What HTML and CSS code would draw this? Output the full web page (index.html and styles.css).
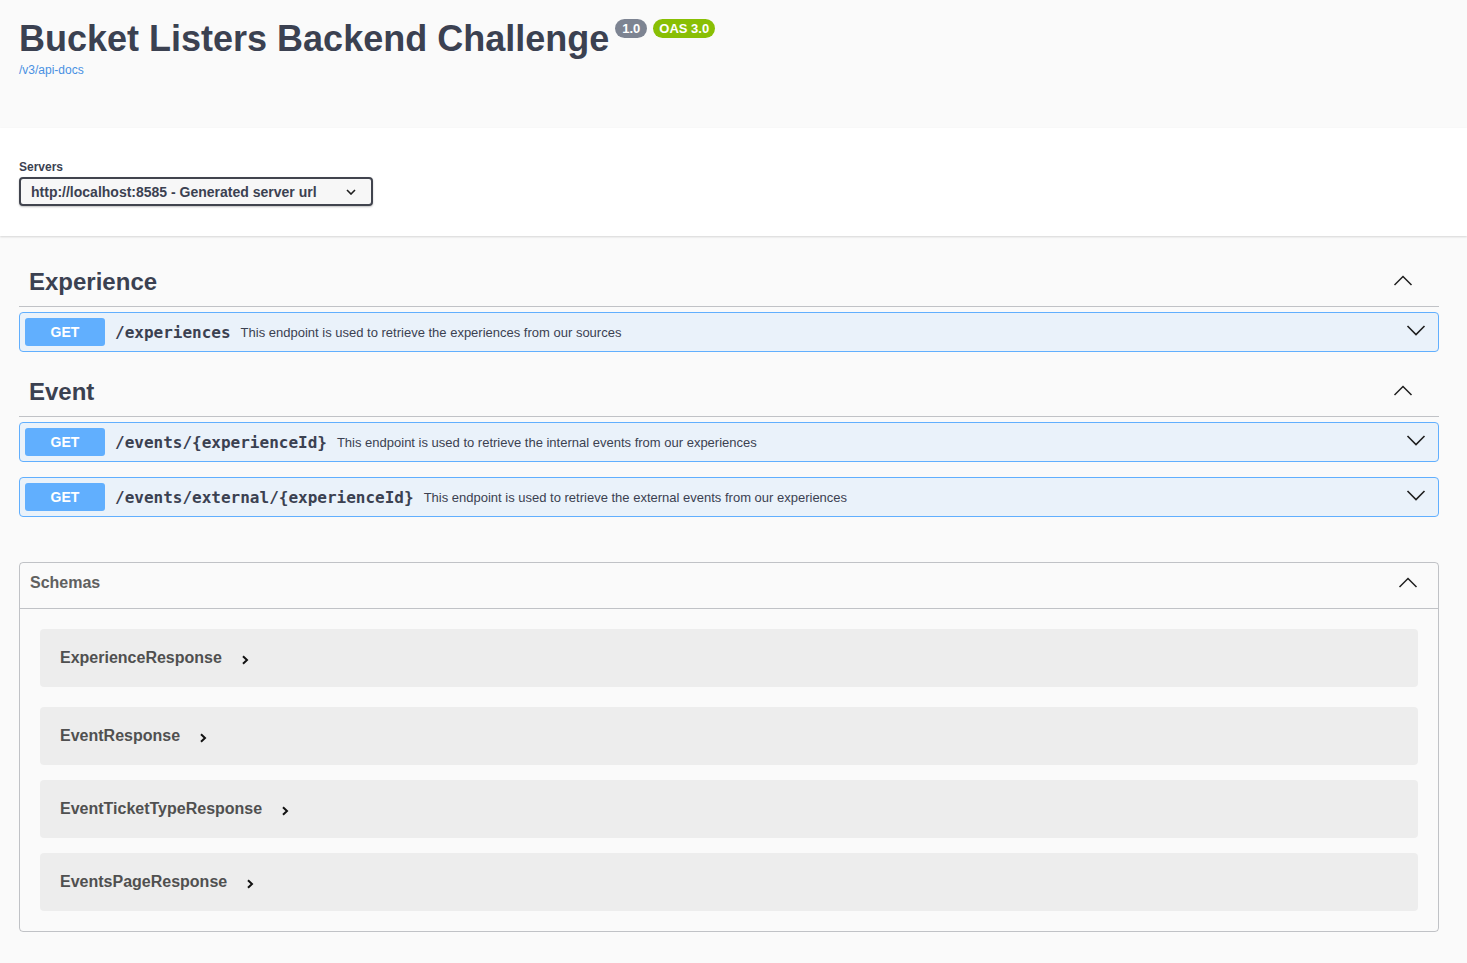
FILE: index.html
```html
<!DOCTYPE html>
<html lang="en">
<head>
<meta charset="utf-8">
<title>Bucket Listers Backend Challenge</title>
<link rel="stylesheet" href="styles.css">
</head>
<body>
  <div class="info">
    <div class="title-row">
      <h2 class="title">Bucket Listers Backend Challenge</h2>
      <span class="badge badge-version">1.0</span>
      <span class="badge badge-oas">OAS 3.0</span>
    </div>
    <a class="spec-link" href="#">/v3/api-docs</a>
  </div>

  <div class="schemes">
    <span class="servers-label">Servers</span>
    <div class="server-select">
      <span>http://localhost:8585 - Generated server url</span>
      <svg class="select-chevron" width="10" height="6" viewBox="0 0 10 6"><polyline points="1,1 5,5 9,1" fill="none" stroke="#1f1f1f" stroke-width="1.6"/></svg>
    </div>
  </div>

  <div class="main">
    <section class="tag-section">
      <h3 class="tag">
        <span>Experience</span>
        <svg class="arrow" width="20" height="20" viewBox="0 0 20 20"><polyline points="1.5,14 10,5.5 18.5,14" fill="none" stroke="#1f1f1f" stroke-width="1.5"/></svg>
      </h3>
      <div class="opblock">
        <span class="method">GET</span>
        <span class="path">/experiences</span>
        <span class="desc">This endpoint is used to retrieve the experiences from our sources</span>
        <svg class="arrow-down" width="20" height="20" viewBox="0 0 20 20"><polyline points="1.5,6 10,14.5 18.5,6" fill="none" stroke="#1f1f1f" stroke-width="1.6"/></svg>
      </div>
    </section>

    <section class="tag-section">
      <h3 class="tag">
        <span>Event</span>
        <svg class="arrow" width="20" height="20" viewBox="0 0 20 20"><polyline points="1.5,14 10,5.5 18.5,14" fill="none" stroke="#1f1f1f" stroke-width="1.5"/></svg>
      </h3>
      <div class="opblock">
        <span class="method">GET</span>
        <span class="path">/events/{experienceId}</span>
        <span class="desc">This endpoint is used to retrieve the internal events from our experiences</span>
        <svg class="arrow-down" width="20" height="20" viewBox="0 0 20 20"><polyline points="1.5,6 10,14.5 18.5,6" fill="none" stroke="#1f1f1f" stroke-width="1.6"/></svg>
      </div>
      <div class="opblock">
        <span class="method">GET</span>
        <span class="path">/events/external/{experienceId}</span>
        <span class="desc">This endpoint is used to retrieve the external events from our experiences</span>
        <svg class="arrow-down" width="20" height="20" viewBox="0 0 20 20"><polyline points="1.5,6 10,14.5 18.5,6" fill="none" stroke="#1f1f1f" stroke-width="1.6"/></svg>
      </div>
    </section>

    <section class="models">
      <h4 class="models-header">
        <span>Schemas</span>
        <svg class="arrow" width="20" height="20" viewBox="0 0 20 20"><polyline points="1.5,14 10,5.5 18.5,14" fill="none" stroke="#1f1f1f" stroke-width="1.5"/></svg>
      </h4>
      <div class="model-list">
        <div class="model-container model-first">
          <span class="model-title">ExperienceResponse</span>
          <svg class="model-toggle" width="8" height="10" viewBox="0 0 8 10"><polyline points="2,1.2 6,5 2,8.8" fill="none" stroke="#111" stroke-width="2"/></svg>
        </div>
        <div class="model-container">
          <span class="model-title">EventResponse</span>
          <svg class="model-toggle" width="8" height="10" viewBox="0 0 8 10"><polyline points="2,1.2 6,5 2,8.8" fill="none" stroke="#111" stroke-width="2"/></svg>
        </div>
        <div class="model-container">
          <span class="model-title">EventTicketTypeResponse</span>
          <svg class="model-toggle" width="8" height="10" viewBox="0 0 8 10"><polyline points="2,1.2 6,5 2,8.8" fill="none" stroke="#111" stroke-width="2"/></svg>
        </div>
        <div class="model-container">
          <span class="model-title">EventsPageResponse</span>
          <svg class="model-toggle" width="8" height="10" viewBox="0 0 8 10"><polyline points="2,1.2 6,5 2,8.8" fill="none" stroke="#111" stroke-width="2"/></svg>
        </div>
      </div>
    </section>
  </div>
</body>
</html>
```

FILE: styles.css
```css
* {
  box-sizing: border-box;
}

body {
  margin: 0;
  background: #fafafa;
  font-family: "Liberation Sans", Arial, sans-serif;
  color: #3b4151;
}

/* ---------- info header ---------- */
.info {
  height: 128px;
  padding: 18px 28px 0 19px;
}

.title-row {
  display: flex;
  align-items: flex-start;
}

.title {
  margin: 0;
  font-size: 36px;
  line-height: 41px;
  font-weight: bold;
  color: #3b4151;
}

.badge {
  margin-top: 1px;
  padding: 2px 6px;
  border-radius: 57px;
  font-size: 13px;
  line-height: 15px;
  font-weight: bold;
  color: #fff;
}

.badge-version {
  margin-left: 6px;
  padding: 2px 7px;
  background: #7d8492;
}

.badge-oas {
  margin-left: 6px;
  background: #89bf04;
}

.spec-link {
  display: block;
  margin-top: 4px;
  font-size: 12px;
  line-height: 14px;
  color: #4990e2;
  text-decoration: none;
}

/* ---------- servers ---------- */
.schemes {
  background: #fff;
  padding: 30px 28px 30px 19px;
  margin-bottom: 21px;
  box-shadow: 0 1px 2px 0 rgba(0, 0, 0, 0.15);
}

.servers-label {
  display: block;
  font-size: 12px;
  line-height: 19px;
  font-weight: bold;
  color: #3b4151;
}

.server-select {
  display: flex;
  align-items: center;
  justify-content: space-between;
  width: 354px;
  height: 29px;
  padding: 0 15px 0 10px;
  border: 2px solid #41444e;
  border-radius: 4px;
  background: #f7f7f7;
  box-shadow: 0 1px 2px 0 rgba(0, 0, 0, 0.25);
  font-size: 14px;
  font-weight: bold;
  color: #3b4151;
}

/* ---------- operations ---------- */
.main {
  padding: 0 28px 0 19px;
}

.tag-section {
  display: flex;
  flex-direction: column;
}

.tag {
  display: flex;
  align-items: center;
  justify-content: space-between;
  height: 50px;
  margin: 0 0 5px;
  padding: 0 26px 0 10px;
  border-bottom: 1px solid rgba(59, 65, 81, 0.3);
  font-size: 24px;
  font-weight: bold;
  color: #3b4151;
}

.tag .arrow {
  margin-bottom: 2px;
}

.opblock {
  display: flex;
  align-items: center;
  height: 40px;
  margin-bottom: 15px;
  padding: 5px;
  border: 1px solid #61affe;
  border-radius: 4px;
  background: rgba(97, 175, 254, 0.1);
}

.method {
  width: 80px;
  height: 28px;
  border-radius: 3px;
  background: #61affe;
  color: #fff;
  font-size: 14px;
  line-height: 28px;
  font-weight: bold;
  text-align: center;
}

.path {
  padding: 0 10px;
  font-family: "DejaVu Sans Mono", "Liberation Mono", monospace;
  font-size: 16px;
  font-weight: bold;
  color: #3b4151;
}

.desc {
  flex: 1;
  font-size: 13px;
  color: #3b4151;
}

.arrow-down {
  margin-right: 7px;
  margin-bottom: 4px;
}

/* ---------- schemas ---------- */
.models {
  margin: 30px 0;
  border: 1px solid rgba(59, 65, 81, 0.3);
  border-radius: 4px;
}

.models-header {
  display: flex;
  align-items: center;
  justify-content: space-between;
  margin: 0;
  height: 46px;
  padding: 10px 20px 15px 10px;
  border-bottom: 1px solid rgba(59, 65, 81, 0.3);
  font-size: 16px;
  line-height: 20px;
  font-weight: bold;
  color: #606060;
}

.model-list {
  padding: 20px 0 5px;
}

.model-container {
  display: flex;
  align-items: center;
  height: 58px;
  margin: 0 20px 15px;
  padding-left: 20px;
  border-radius: 4px;
  background: rgba(0, 0, 0, 0.05);
}

.model-first {
  margin-bottom: 20px;
}

.model-title {
  font-size: 16px;
  font-weight: bold;
  color: #505050;
}

.model-toggle {
  margin-left: 19px;
  margin-top: 3px;
}
```
